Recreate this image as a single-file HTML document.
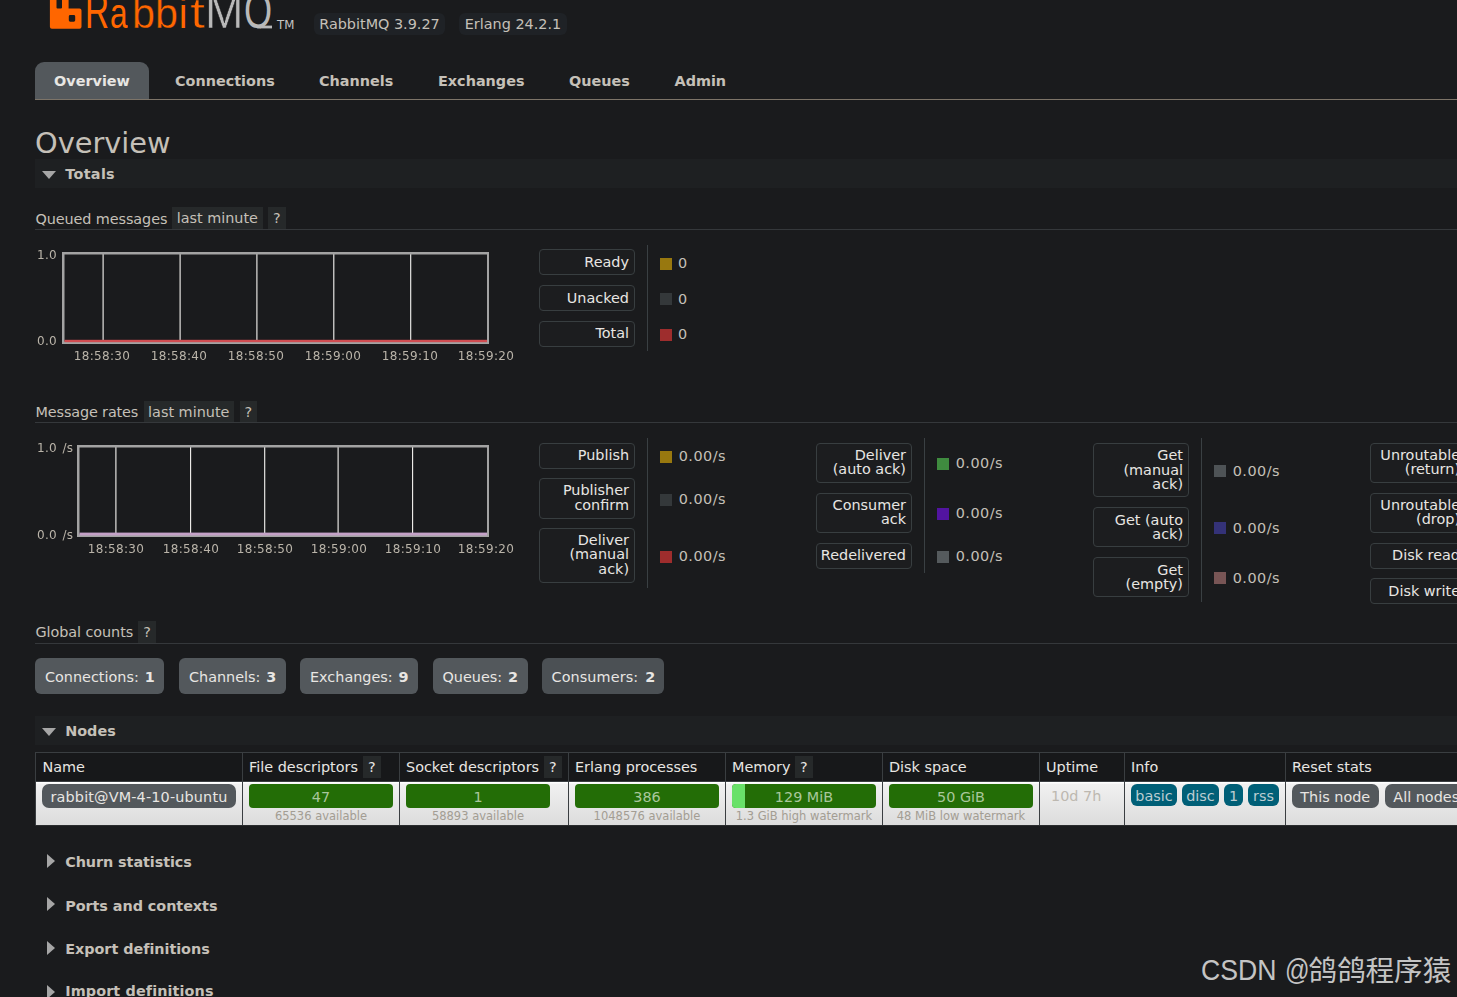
<!DOCTYPE html>
<html lang="en">
<head>
<meta charset="utf-8">
<title>RabbitMQ Management</title>
<style>
html,body{margin:0;padding:0;background:#1a1b1d;}
body{width:1457px;height:997px;overflow:hidden;position:relative;font-family:"DejaVu Sans","Liberation Sans",sans-serif;font-size:14.4px;color:#c5c0b8;}
.logo{position:absolute;left:0;top:0;width:310px;height:50px;overflow:hidden;font-family:"Liberation Sans",sans-serif;font-size:43px;line-height:50px;color:#ff6600;white-space:nowrap;}
.logo span{position:relative;display:inline-block;vertical-align:top;width:0;height:50px;transform-origin:0 40px;}
.logo sup{position:relative;display:inline-block;vertical-align:top;width:0;left:277px;top:17.5px;font-family:"DejaVu Sans",sans-serif;font-size:11.8px;line-height:14px;color:#c4c4c4;}
.wm{position:absolute;left:0;top:951px;width:1457px;height:46px;overflow:hidden;white-space:nowrap;font-size:29.2px;line-height:36px;color:#c4c4c4;font-family:"Liberation Sans","Noto Sans CJK SC",sans-serif;}
.wm span{position:relative;display:inline-block;vertical-align:top;width:0;height:36px;transform-origin:0 0;}
.t{position:absolute;white-space:nowrap;line-height:17px;height:17px;}
.b{font-weight:bold;}
.lt{color:#e8e6e3;}
.badge{position:absolute;background:#26292a;color:#c5c0b8;line-height:22px;height:22px;text-align:center;white-space:nowrap;}
.hl{position:absolute;height:1px;background:#35383b;left:35px;right:0;}
.sec{position:absolute;left:35px;right:0;height:29px;background:#1e2022;}
.tri{position:absolute;width:0;height:0;border-left:7px solid transparent;border-right:7px solid transparent;border-top:8.5px solid #a6a6a6;}
.trir{position:absolute;left:47px;width:0;height:0;border-top:7px solid transparent;border-bottom:7px solid transparent;border-left:8px solid #a6a6a6;}
.tab{position:absolute;top:62px;height:37px;line-height:39px;font-weight:bold;color:#c5c0b8;white-space:nowrap;}
.tab.sel{background:#53585c;border-radius:9px 9px 0 0;color:#e8e6e3;text-align:center;}
.lbox{position:absolute;width:96px;border:1px solid #383e40;border-radius:4px;background:#1c1d1f;color:#e8e6e3;text-align:right;line-height:14.4px;padding:3.6px 5px 0 0;box-sizing:border-box;white-space:nowrap;}
.vsep{position:absolute;width:1px;background:#3a4043;}
.sq{position:absolute;width:12px;height:12px;}
.cl{position:absolute;font-size:12px;line-height:14px;white-space:nowrap;color:#bab4a9;letter-spacing:0.3px;will-change:transform;}
.cnt{position:absolute;top:658px;height:36px;line-height:39px;background:#53585c;border-radius:6px;color:#e8e6e3;white-space:nowrap;box-sizing:border-box;padding-left:10px;}
.cnt b{font-weight:bold;margin-left:1.3px;}
.th{position:absolute;top:753px;height:28px;background:#17181a;border-left:1px solid #3a3e41;box-sizing:border-box;}
.td{position:absolute;top:782px;height:43px;border-left:1px solid #3a3e41;box-sizing:border-box;background:linear-gradient(#ffffff 0,#ffffff 1px,#f1f1f1 2px,#dcdcdc 100%);}
.bar{position:absolute;top:784px;height:24px;width:144px;background:#236d06;border-radius:4px;color:#a9c79c;text-align:center;line-height:26px;white-space:nowrap;}
.sub{position:absolute;top:809px;width:156px;text-align:center;font-size:11.5px;line-height:15px;color:#a39d93;white-space:nowrap;}
.pill{position:absolute;top:784px;height:22px;line-height:24px;background:#005f77;border-radius:6px;color:#bccdd2;text-align:center;white-space:nowrap;}
.btn{position:absolute;top:784px;height:24px;line-height:25px;background:#53585c;border-radius:7px;color:#e8e6e3;white-space:nowrap;text-align:center;}
</style>
</head>
<body>
<svg style="position:absolute;left:0;top:0" width="310" height="50" viewBox="0 0 310 50">
<path d="M49.9 0 L49.9 26.8 Q49.9 28.8 51.9 28.8 L79.5 28.8 Q81.5 28.8 81.5 26.8 L81.5 10.5 Q81.5 8.5 79.5 8.5 L68.6 8.5 L68.6 0 L62 0 L62 7.5 Q62 8.5 61 8.5 L57.5 8.5 Q56.5 8.5 56.5 7.5 L56.5 0 Z M70.2 15.1 Q68.8 15.1 68.8 16.5 L68.8 20.3 Q68.8 21.7 70.2 21.7 L73.8 21.7 Q75.2 21.7 75.2 20.3 L75.2 16.5 Q75.2 15.1 73.8 15.1 Z" fill="#ff6600" fill-rule="evenodd"/>
<rect x="260" y="25.6" width="12" height="2.8" fill="#b9b9b9"/>
</svg>
<div class="logo"><span style="left:85.06px;top:-12px;transform:scale(0.776,1.17);">R</span><span style="left:110.36px;top:-12px;transform:scale(0.733,1);">a</span><span style="left:131.93px;top:-12px;transform:scale(0.962,1.0);-webkit-text-stroke:0.42px #1a1b1d;">b</span><span style="left:154.93px;top:-12px;transform:scale(0.962,1.0);-webkit-text-stroke:0.42px #1a1b1d;">b</span><span style="left:179.29px;top:-12px;transform:scale(0.873,1);">i</span><span style="left:189.72px;top:-12px;transform:scale(1.275,1);-webkit-text-stroke:0.71px #1a1b1d;">t</span><span style="left:204.75px;top:-12px;transform:scale(1.078,1.17);color:#b9b9b9;-webkit-text-stroke:0.46px #1a1b1d;">M</span><span style="left:243.59px;top:-11.7px;transform:scale(0.841,1.17);color:#b9b9b9;clip-path:inset(-20px -60px 9.5px -5px);">Q</span><sup>TM</sup></div>
<div class="badge" style="left:314px;top:13px;width:131px;border-radius:6px;background:#1f2226">RabbitMQ 3.9.27</div>
<div class="badge" style="left:459px;top:13px;width:108px;border-radius:6px;background:#1f2226">Erlang 24.2.1</div>
<div class="tab sel" style="left:35px;width:114px">Overview</div>
<div class="tab" style="left:175px">Connections</div>
<div class="tab" style="left:319px">Channels</div>
<div class="tab" style="left:438px">Exchanges</div>
<div class="tab" style="left:569px">Queues</div>
<div class="tab" style="left:674.5px">Admin</div>
<div class="hl" style="top:99px;background:#7d7468"></div>
<div class="t" style="left:35px;top:124.5px;font-size:28.8px;line-height:36px;height:36px;">Overview</div>
<div class="sec" style="top:159px"><div class="tri" style="left:7px;top:11.5px"></div></div>
<div class="t b" style="left:65.3px;top:166px;letter-spacing:0.3px;">Totals</div>
<div class="t " style="left:35.5px;top:211px;letter-spacing:-0.09px;">Queued messages</div>
<div class="badge" style="left:172px;top:207px;width:90.7px">last minute</div>
<div class="badge" style="left:268px;top:207px;width:17.8px">?</div>
<div class="hl" style="top:229px"></div>
<svg style="position:absolute;left:61.5px;top:252px" width="427.5" height="92" viewBox="0 0 427.5 92"><rect x="40.55" y="2" width="1.1" height="88" fill="#f6f5f2"/><rect x="117.55" y="2" width="1.1" height="88" fill="#f6f5f2"/><rect x="194.35" y="2" width="1.1" height="88" fill="#f6f5f2"/><rect x="271.25" y="2" width="1.1" height="88" fill="#f6f5f2"/><rect x="348.15" y="2" width="1.1" height="88" fill="#f6f5f2"/><rect x="1.25" y="1.25" width="425.0" height="89.5" fill="none" stroke="#a3a3a3" stroke-width="2.5"/><rect x="2.5" y="87.8" width="422.5" height="2.4" fill="#d04c51"/></svg>
<div class="cl" style="right:1400px;top:248px;text-align:right;word-spacing:1.4px">1.0</div>
<div class="cl" style="right:1400px;top:334px;text-align:right;word-spacing:1.4px">0.0</div>
<div class="cl" style="left:61.89999999999999px;width:80px;text-align:center;top:349px">18:58:30</div>
<div class="cl" style="left:138.9px;width:80px;text-align:center;top:349px">18:58:40</div>
<div class="cl" style="left:215.7px;width:80px;text-align:center;top:349px">18:58:50</div>
<div class="cl" style="left:292.6px;width:80px;text-align:center;top:349px">18:59:00</div>
<div class="cl" style="left:369.5px;width:80px;text-align:center;top:349px">18:59:10</div>
<div class="cl" style="left:445.8px;width:80px;text-align:center;top:349px">18:59:20</div>
<div class="lbox" style="left:539px;top:249px;height:26px;padding-top:4.6px">Ready</div>
<div class="lbox" style="left:539px;top:285px;height:26px;padding-top:4.6px">Unacked</div>
<div class="lbox" style="left:539px;top:321px;height:26px;padding-top:3.8px">Total</div>
<div class="vsep" style="left:647px;top:245px;height:106px"></div>
<div class="sq" style="left:660px;top:258px;background:#98780f"></div>
<div class="t " style="left:678px;top:255px;">0</div>
<div class="sq" style="left:660px;top:293px;background:#34383a"></div>
<div class="t " style="left:678px;top:291px;">0</div>
<div class="sq" style="left:660px;top:329px;background:#9e2d2d"></div>
<div class="t " style="left:678px;top:326px;">0</div>
<div class="t " style="left:35.5px;top:404px;letter-spacing:-0.13px;">Message rates</div>
<div class="badge" style="left:143.5px;top:401px;width:90.5px;height:21px;line-height:23px">last minute</div>
<div class="badge" style="left:239.5px;top:401px;width:17.5px;height:21px;line-height:23px">?</div>
<div class="hl" style="top:422px"></div>
<svg style="position:absolute;left:76.5px;top:445px" width="412.5" height="92" viewBox="0 0 412.5 92"><rect x="38.35" y="2" width="1.1" height="88" fill="#f6f5f2"/><rect x="113.05" y="2" width="1.1" height="88" fill="#f6f5f2"/><rect x="187.15" y="2" width="1.1" height="88" fill="#f6f5f2"/><rect x="260.55" y="2" width="1.1" height="88" fill="#f6f5f2"/><rect x="335.05" y="2" width="1.1" height="88" fill="#f6f5f2"/><rect x="1.25" y="1.25" width="410.0" height="89.5" fill="none" stroke="#a3a3a3" stroke-width="2.5"/><rect x="2.5" y="87.6" width="407.5" height="2.9" fill="#c4a1c7"/></svg>
<div class="cl" style="right:1383.4px;top:441px;text-align:right;word-spacing:1.4px">1.0 /s</div>
<div class="cl" style="right:1383.4px;top:527.5px;text-align:right;word-spacing:1.4px">0.0 /s</div>
<div class="cl" style="left:76.4px;width:80px;text-align:center;top:542px">18:58:30</div>
<div class="cl" style="left:151.1px;width:80px;text-align:center;top:542px">18:58:40</div>
<div class="cl" style="left:225.2px;width:80px;text-align:center;top:542px">18:58:50</div>
<div class="cl" style="left:298.6px;width:80px;text-align:center;top:542px">18:59:00</div>
<div class="cl" style="left:373.1px;width:80px;text-align:center;top:542px">18:59:10</div>
<div class="cl" style="left:445.6px;width:80px;text-align:center;top:542px">18:59:20</div>
<div class="lbox" style="left:539px;top:443px;height:26px;padding-top:3.8px">Publish</div>
<div class="sq" style="left:660px;top:450.7px;background:#98780f"></div>
<div class="t " style="left:678.7px;top:448px;letter-spacing:0.5px;">0.00/s</div>
<div class="lbox" style="left:539px;top:478px;height:41px;padding-top:4.1px">Publisher<br>confirm</div>
<div class="sq" style="left:660px;top:494px;background:#34383a"></div>
<div class="t " style="left:678.7px;top:491px;letter-spacing:0.5px;">0.00/s</div>
<div class="lbox" style="left:539px;top:528px;height:55px;padding-top:3.9px">Deliver<br>(manual<br>ack)</div>
<div class="sq" style="left:660px;top:551px;background:#9e2d2d"></div>
<div class="t " style="left:678.7px;top:548px;letter-spacing:0.5px;">0.00/s</div>
<div class="vsep" style="left:647px;top:438px;height:150px"></div>
<div class="lbox" style="left:816px;top:443px;height:40px;padding-top:3.6px">Deliver<br>(auto ack)</div>
<div class="sq" style="left:937px;top:458.2px;background:#3f8b3f"></div>
<div class="t " style="left:955.7px;top:455px;letter-spacing:0.5px;">0.00/s</div>
<div class="lbox" style="left:816px;top:493px;height:40px;padding-top:3.6px">Consumer<br>ack</div>
<div class="sq" style="left:937px;top:508px;background:#5214a0"></div>
<div class="t " style="left:955.7px;top:505px;letter-spacing:0.5px;">0.00/s</div>
<div class="lbox" style="left:816px;top:543px;height:26px;padding-top:3.8px">Redelivered</div>
<div class="sq" style="left:937px;top:551px;background:#555a5d"></div>
<div class="t " style="left:955.7px;top:548px;letter-spacing:0.5px;">0.00/s</div>
<div class="vsep" style="left:924px;top:438px;height:135px"></div>
<div class="lbox" style="left:1093px;top:443px;height:54px;padding-top:4.4px">Get<br>(manual<br>ack)</div>
<div class="sq" style="left:1214px;top:465.4px;background:#4e5356"></div>
<div class="t " style="left:1232.7px;top:463px;letter-spacing:0.5px;">0.00/s</div>
<div class="lbox" style="left:1093px;top:507px;height:40px;padding-top:4.6px">Get (auto<br>ack)</div>
<div class="sq" style="left:1214px;top:522px;background:#343278"></div>
<div class="t " style="left:1232.7px;top:520px;letter-spacing:0.5px;">0.00/s</div>
<div class="lbox" style="left:1093px;top:557px;height:40px;padding-top:4.6px">Get<br>(empty)</div>
<div class="sq" style="left:1214px;top:572px;background:#785555"></div>
<div class="t " style="left:1232.7px;top:570px;letter-spacing:0.5px;">0.00/s</div>
<div class="vsep" style="left:1201px;top:438px;height:164px"></div>
<div class="lbox" style="left:1370px;top:443px;height:40px;padding-top:3.6px">Unroutable<br>(return)</div>
<div class="lbox" style="left:1370px;top:493px;height:40px;padding-top:3.6px">Unroutable<br>(drop)</div>
<div class="lbox" style="left:1370px;top:543px;height:26px;padding-top:3.8px">Disk read</div>
<div class="lbox" style="left:1370px;top:578px;height:26px;padding-top:4.8px">Disk write</div>
<div class="t " style="left:35.5px;top:624px;letter-spacing:-0.07px;">Global counts</div>
<div class="badge" style="left:138px;top:621px;width:18px">?</div>
<div class="hl" style="top:643px"></div>
<div class="cnt" style="left:35px;width:129px;">Connections: <b>1</b></div>
<div class="cnt" style="left:179px;width:107px;">Channels: <b>3</b></div>
<div class="cnt" style="left:300px;width:118px;">Exchanges: <b>9</b></div>
<div class="cnt" style="left:432.5px;width:95px;">Queues: <b>2</b></div>
<div class="cnt" style="left:541.5px;width:122px;background:#4b5054;letter-spacing:0.1px;word-spacing:1px;">Consumers: <b>2</b></div>
<div class="sec" style="top:716px"><div class="tri" style="left:7px;top:11.5px"></div></div>
<div class="t b" style="left:65.2px;top:723px;">Nodes</div>
<div style="position:absolute;left:35px;right:0;top:752px;height:1px;background:#3a3e41"></div>
<div style="position:absolute;left:35px;right:0;top:781px;height:1px;background:#3a3e41"></div>
<div style="position:absolute;left:35px;right:0;top:825px;height:1px;background:#2a2c2e"></div>
<div class="th" style="left:35px;width:207px"></div>
<div class="td" style="left:35px;width:207px"></div>
<div class="th" style="left:242px;width:157px"></div>
<div class="td" style="left:242px;width:157px"></div>
<div class="th" style="left:399px;width:169px"></div>
<div class="td" style="left:399px;width:169px"></div>
<div class="th" style="left:568px;width:157px"></div>
<div class="td" style="left:568px;width:157px"></div>
<div class="th" style="left:725px;width:157px"></div>
<div class="td" style="left:725px;width:157px"></div>
<div class="th" style="left:882px;width:157px"></div>
<div class="td" style="left:882px;width:157px"></div>
<div class="th" style="left:1039px;width:85px"></div>
<div class="td" style="left:1039px;width:85px"></div>
<div class="th" style="left:1124px;width:161px"></div>
<div class="td" style="left:1124px;width:161px"></div>
<div class="th" style="left:1285px;width:215px"></div>
<div class="td" style="left:1285px;width:215px"></div>
<div class="t lt" style="left:42.5px;top:759px;">Name</div>
<div class="t lt" style="left:249px;top:759px;">File descriptors</div>
<div class="t lt" style="left:406px;top:759px;">Socket descriptors</div>
<div class="t lt" style="left:575px;top:759px;">Erlang processes</div>
<div class="t lt" style="left:732px;top:759px;">Memory</div>
<div class="t lt" style="left:889px;top:759px;">Disk space</div>
<div class="t lt" style="left:1046px;top:759px;">Uptime</div>
<div class="t lt" style="left:1131px;top:759px;">Info</div>
<div class="t lt" style="left:1292px;top:759px;">Reset stats</div>
<div class="badge" style="left:363px;top:756px;width:17.5px;color:#e8e6e3">?</div>
<div class="badge" style="left:544px;top:756px;width:17.5px;color:#e8e6e3">?</div>
<div class="badge" style="left:795px;top:756px;width:17.5px;color:#e8e6e3">?</div>
<div class="btn" style="left:42px;width:194px;letter-spacing:0.16px;line-height:27px">rabbit@VM-4-10-ubuntu</div>
<div class="bar" style="left:249px">47</div>
<div class="sub" style="left:243px">65536 available</div>
<div class="bar" style="left:406px">1</div>
<div class="sub" style="left:400px">58893 available</div>
<div class="bar" style="left:575px">386</div>
<div class="sub" style="left:569px">1048576 available</div>
<div class="bar" style="left:732px"><div style="position:absolute;left:0;top:0;width:13px;height:24px;background:#69e169;border-radius:4px 0 0 4px"></div>129 MiB</div>
<div class="sub" style="left:726px">1.3 GiB high watermark</div>
<div class="bar" style="left:889px">50 GiB</div>
<div class="sub" style="left:883px">48 MiB low watermark</div>
<div class="t " style="left:1051px;top:788px;color:#bdb8b0">10d 7h</div>
<div class="pill" style="left:1131px;width:46px">basic</div>
<div class="pill" style="left:1182px;width:37px">disc</div>
<div class="pill" style="left:1224px;width:19px">1</div>
<div class="pill" style="left:1248px;width:31px">rss</div>
<div class="btn" style="left:1292px;width:87px;line-height:27px;text-align:left;padding-left:8.3px;box-sizing:border-box">This node</div>
<div class="btn" style="left:1385px;width:87px;line-height:27px;text-align:left;padding-left:8.3px;box-sizing:border-box">All nodes</div>
<div class="trir" style="top:854px"></div>
<div class="t b" style="left:65.2px;top:854px;letter-spacing:-0.08px;">Churn statistics</div>
<div class="trir" style="top:897px"></div>
<div class="t b" style="left:65.2px;top:898px;letter-spacing:-0.06px;">Ports and contexts</div>
<div class="trir" style="top:941px"></div>
<div class="t b" style="left:65.2px;top:941px;letter-spacing:-0.04px;">Export definitions</div>
<div class="trir" style="top:984.5px"></div>
<div class="t b" style="left:65.2px;top:983px;letter-spacing:0.11px;">Import definitions</div>
<div class="wm"><span style="left:1201px;top:0.5px;transform:scaleX(0.912)">CSDN</span> <span style="left:1276.88px;top:0.5px;transform:scaleX(0.83)">@</span><span style="left:1300.18px;top:0;font-family:'Noto Sans CJK SC','WenQuanYi Zen Hei',sans-serif;font-size:28.6px">鸽鸽程序猿</span></div>
</body>
</html>
